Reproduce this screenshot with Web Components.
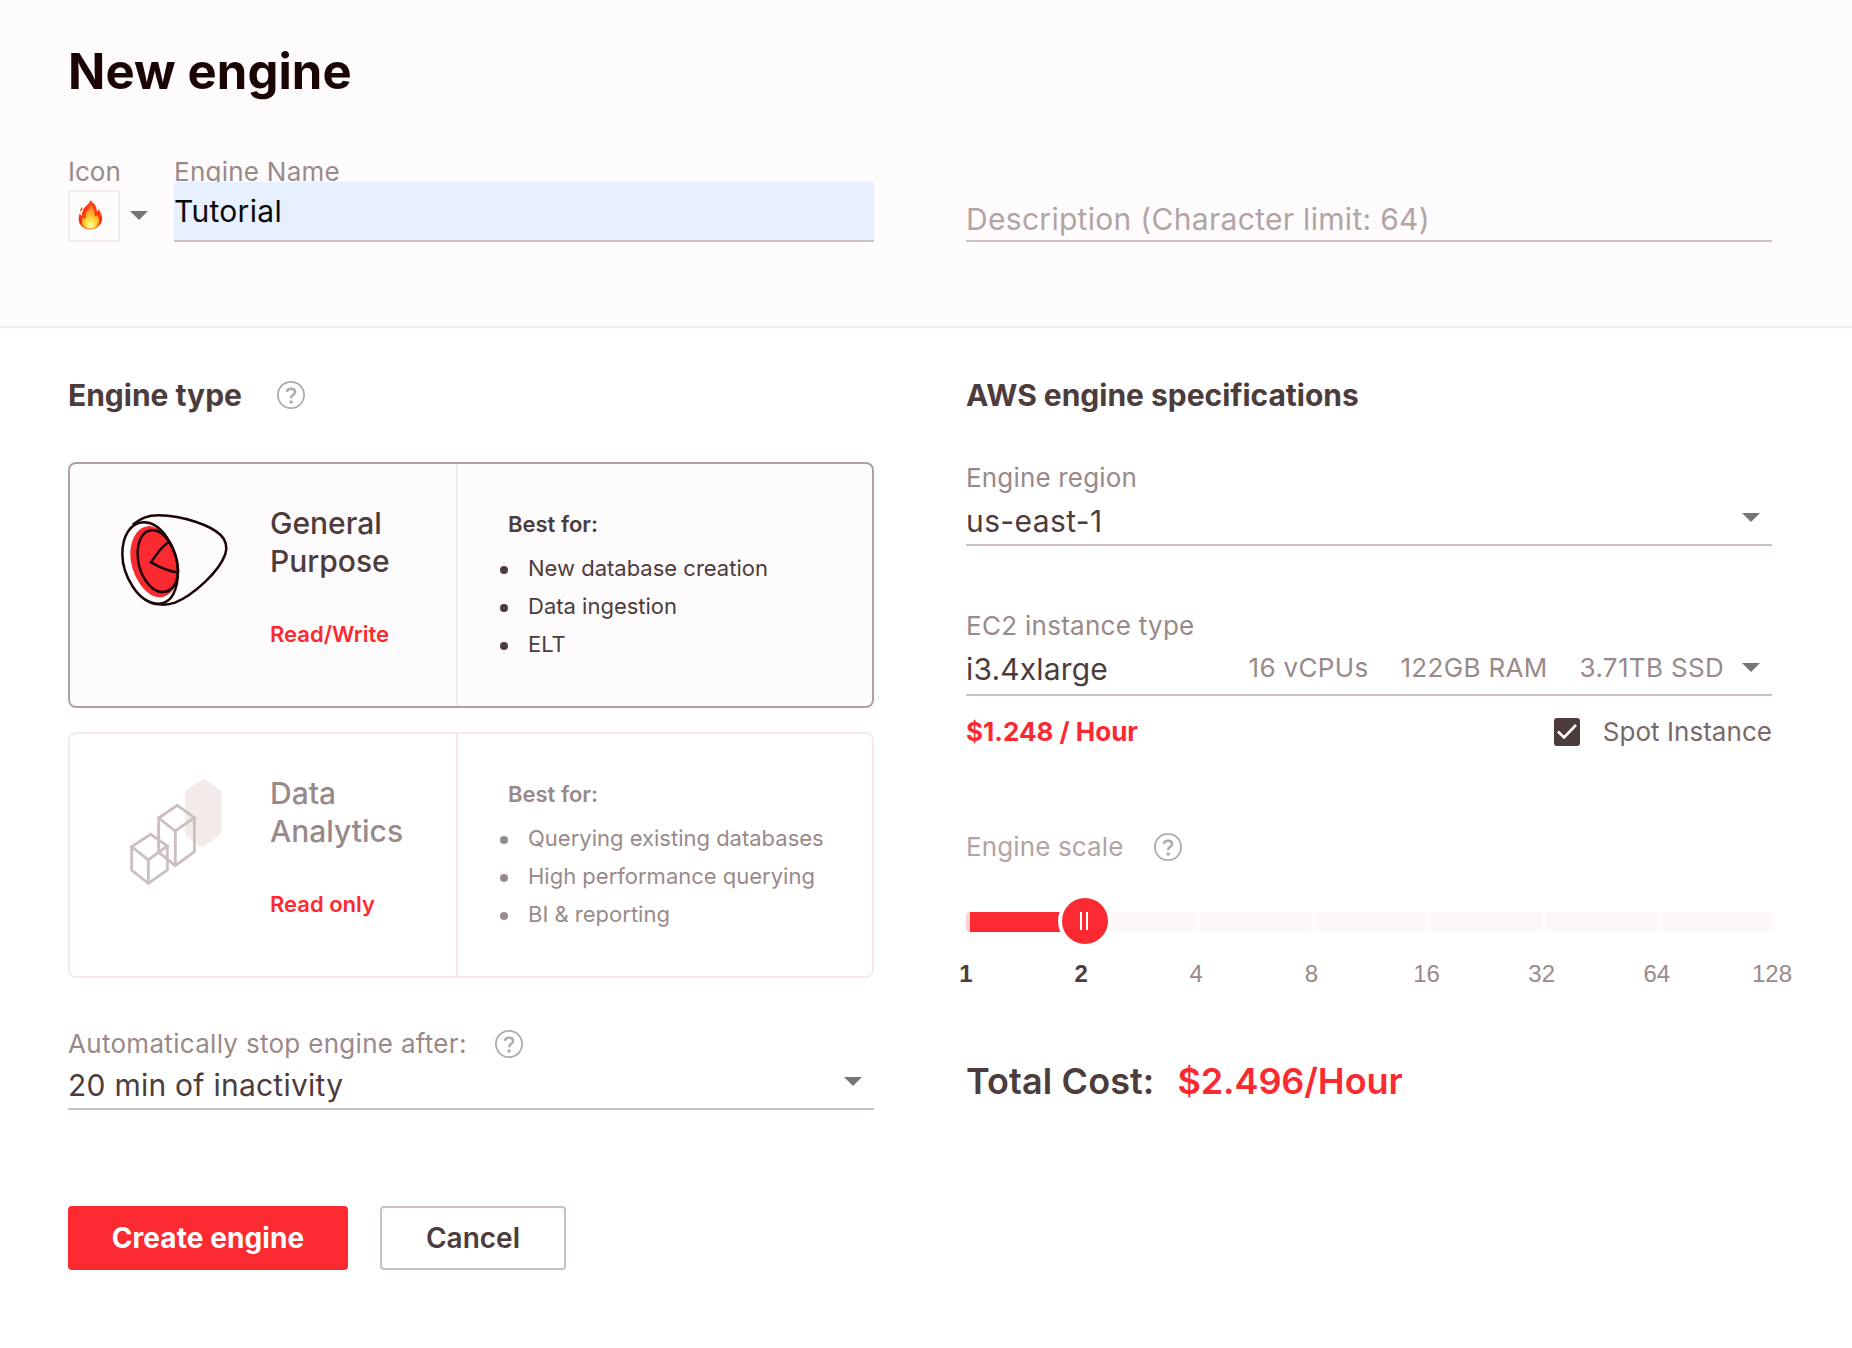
<!DOCTYPE html>
<html lang="en">
<head>
<meta charset="utf-8">
<title>New engine</title>
<style>
  body { margin: 0; background: #fff; font-family: Inter, "Liberation Sans", sans-serif; color: #4d3c3c; }
</style>
</head>
<body>
<new-engine-page></new-engine-page>

<script>
const define = (name, html, setup) => {
  const template = document.createElement('template');
  template.innerHTML = html;
  customElements.define(name, class extends HTMLElement {
    constructor() {
      super();
      this.attachShadow({ mode: 'open' }).append(template.content.cloneNode(true));
    }
    connectedCallback() {
      if (setup && !this.ready) { this.ready = true; setup(this, this.shadowRoot); }
    }
  });
};

define('help-icon', `
<style>
  :host { display: block; width: 28px; height: 28px; }
  svg { display: block; }
</style>
<svg width="28" height="28" viewBox="0 0 28 28" fill="none" stroke="#adadad">
  <circle cx="14" cy="14" r="13.1" stroke-width="1.800"/>
  <path d="M9.900 10.900c.2-2 1.800-3.200 4.100-3.200 2.400 0 4.100 1.300 4.100 3.200 0 1.400-.7 2.200-2 3-1.400.9-1.900 1.500-1.900 2.900v.5" stroke-width="2.500"/>
  <circle cx="14.100" cy="21" r="1.800" fill="#adadad" stroke="none"/>
</svg>`);

define('caret-icon', `
<style>
  :host { display: block; width: 18px; height: 9px; }
  svg { display: block; }
</style>
<svg width="18" height="9" viewBox="0 0 18 9"><path d="M0 0h18L9 9z" fill="#757575"/></svg>`);

define('field-label', `
<style>
  :host { display: flex; align-items: center; box-sizing: border-box; height: 32px; padding-top: 2px; font-size: 26px; line-height: 30px; color: #998a8a; letter-spacing: .25px; white-space: nowrap; }
  ::slotted(help-icon) { margin-left: 28px; }
</style>
<slot></slot>`);

define('section-title', `
<style>
  :host { display: flex; align-items: center; height: 36px; font-size: 30px; line-height: 36px; font-weight: 700; letter-spacing: -.02px; white-space: nowrap; }
  ::slotted(help-icon) { margin-left: 35px; }
</style>
<slot></slot>`);

define('select-line', `
<style>
  :host { display: flex; box-sizing: border-box; border-bottom: 2px solid #cbbfbf; padding-right: 12px; font-size: 30px; letter-spacing: .25px; line-height: 40px; white-space: nowrap; }
  .value { flex: 1; }
  .specs { display: flex; gap: 32px; margin-right: 18px; font-size: 26px; line-height: 38px; color: #998a8a; letter-spacing: .33px; }
  caret-icon { margin-top: var(--caret-top, 12px); }
</style>
<div class="value"><slot></slot></div>
<div class="specs"><slot name="spec"></slot></div>
<caret-icon></caret-icon>`);

define('icon-picker', `
<style>
  :host { display: block; width: 106px; }
  .row { display: flex; align-items: flex-start; gap: 10px; margin-top: 3px; }
  caret-icon { margin-top: 21px; }
  .box { box-sizing: border-box; width: 52px; height: 52px; border: 2px solid #f5eaea; display: flex; padding: 6px 0 0 8px; }
</style>
<field-label style="letter-spacing:0">Icon</field-label>
<div class="row">
  <div class="box">
    <svg width="25" height="32" viewBox="0 0 25 32">
      <defs>
        <linearGradient id="outer" x1="0" y1="0" x2="0" y2="1">
          <stop offset="0" stop-color="#e8481c"/><stop offset=".45" stop-color="#ff3a12"/><stop offset=".75" stop-color="#fa2a0c"/><stop offset="1" stop-color="#ff9d1c"/>
        </linearGradient>
        <radialGradient id="inner" cx=".5" cy=".88" r=".8">
          <stop offset="0" stop-color="#fffcc8"/><stop offset=".28" stop-color="#ffe84a"/><stop offset=".6" stop-color="#ffb42a"/><stop offset="1" stop-color="#f5702a"/>
        </radialGradient>
      </defs>
      <path d="M12.200 2.500c4.200 2.500 6.800 6.500 6.700 11.300.8-.6 1.200-1.500 1.500-2.600 2.400 2.800 3.800 6 3.700 9.400-.2 6.400-5.100 10.900-11.400 10.900C6.300 31.500.9 27.600.7 21.400c-.1-2.200.3-4.300 1.300-6.300.3 1.400.9 2.500 1.900 3.200-.1-4.600 1.400-8 4.300-10.500 1.900-1.600 3.400-3 4-5.300z" fill="url(#outer)"/>
      <path d="M12.600 6.500c2.600 3 4.300 6.300 4 10.300-.1 1.200.4 1.700 1 1.500.7-.2 1.200-.8 1.600-1.400 1.500 2.200 2.200 4.300 1.800 6.600-.6 4-3.700 7-8.100 7-5 0-8.800-2.900-9-7.200-.1-1.500.2-2.900.8-4.100.8 1 1.800 1.400 2.700 1.100.6-.3.5-1.300.4-2.600-.2-4.400 3.800-6 4.800-11.200z" fill="url(#inner)"/>
      <path d="M3.600 9.300l1.200.9-2 3.200-1-.9z" fill="#ff4a18"/>
    </svg>
  </div>
  <caret-icon></caret-icon>
</div>`);

define('name-input', `
<style>
  :host { display: block; width: 700px; }
  .label { height: 27px; }
  .input { position: relative; box-sizing: border-box; height: 60px; background: #e6f0ff; border-bottom: 2px solid #cbbfbf; color: #0d0808; font-size: 30px; line-height: 58px; letter-spacing: .3px; }
</style>
<div class="label"><field-label>Engine Name</field-label></div>
<div class="input">Tutorial</div>`);

define('description-input', `
<style>
  :host { display: block; box-sizing: border-box; width: 806px; height: 42px; border-bottom: 2px solid #cbbfbf; color: #b3a4a4; font-size: 30px; line-height: 38px; letter-spacing: .3px; white-space: nowrap; }
</style>
Description (Character limit: 64)`);

define('page-header', `
<style>
  :host { display: block; box-sizing: border-box; height: 328px; padding: 42px 80px 0 68px; background: #fefbfc; border-bottom: 2px solid #f5ecea; }
  h1 { margin: 0 0 53px; height: 60px; font-size: 49px; line-height: 60px; font-weight: 700; letter-spacing: .1px; color: #1b0405; }
  .fields { display: flex; }
  description-input { margin: 45px 0 0 92px; }
</style>
<h1>New engine</h1>
<div class="fields">
  <icon-picker></icon-picker>
  <name-input></name-input>
  <description-input></description-input>
</div>`);

define('engine-card', `
<style>
  :host { display: flex; box-sizing: border-box; width: 806px; height: 246px; border: 2px solid #f5eaea; border-radius: 8px; color: #998a8a; }
  :host([selected]) { border-color: #b0a2a2; background: #fefbfc; color: #4d3c3c; }
  .left { display: flex; box-sizing: border-box; width: 388px; border-right: 2px solid #f5eaea; }
  .icon { width: 200px; }
  h3 { margin: 40px 0 0; font-size: 30px; line-height: 38px; font-weight: 500; letter-spacing: 0; }
  .mode { margin-top: 39px; color: #fb2a31; font-size: 22px; line-height: 30px; font-weight: 600; }
  .right { flex: 1; padding: 45px 0 0 50px; font-size: 22px; line-height: 30px; }
  .best { font-weight: 600; }
  ul { margin: 10px 0 0; padding: 0; list-style: none; line-height: 38px; white-space: nowrap; }
  li { display: flex; align-items: center; margin-left: -8px; }
  li::before { content: ""; width: 8px; height: 8px; border-radius: 50%; margin: 3px 20px 0 0; background: currentColor; }
</style>
<div class="left">
  <div class="icon"><slot name="icon"></slot></div>
  <div><h3></h3><div class="mode"></div></div>
</div>
<div class="right"><div class="best">Best for:</div><ul></ul></div>`,
(host, root) => {
  const [first, second] = host.getAttribute('name').split(' ');
  root.querySelector('h3').append(first, document.createElement('br'), second);
  root.querySelector('.mode').textContent = host.getAttribute('mode');
  for (const text of host.getAttribute('uses').split('|')) {
    const li = document.createElement('li');
    li.textContent = text;
    root.querySelector('ul').append(li);
  }
});

define('scope-icon', `
<style>
  :host { display: block; padding: 46px 0 0 48px; }
  svg { display: block; }
</style>
<svg width="114" height="99" viewBox="204 450 342 297" fill="none" stroke="#1b0405" stroke-width="7.500" stroke-linejoin="round">
  <path d="M285 487C240 487 217 530 217 582 217 645 265 731 325 731 365 731 384 690 384 630 382 565 335 487 285 487Z" fill="#fff" stroke="none"/>
  <path d="M298 498C262 498 241 540 241 582 241 645 287 712 328 712 348 712 366 698 374 680L384 630C378 570 340 500 298 498Z" fill="#fb2a31" stroke="none"/>
  <path d="M248 494C272 475 292 466 326 466 402 467 482 497 512 525 530 543 532 562 526 582 508 635 430 705 375 728 352 736 320 736 300 727"/>
  <path d="M283 487C240 487 217 530 217 582 217 645 265 731 325 731 365 731 384 690 384 630 381 560 332 487 283 487Z"/>
  <path d="M308 511C278 511 263 542 263 582 263 640 300 696 337 696 368 696 384 668 384 630 380 570 345 511 308 511Z"/>
  <path d="M360 545C343 552 330 568 303 607 330 622 358 636 384 637" stroke-linejoin="miter"/>
</svg>`);

define('cubes-icon', `
<style>
  :host { display: block; padding: 43px 0 0 52px; }
  svg { display: block; }
</style>
<svg width="102" height="110" viewBox="216 171 306 330" fill="none" stroke="#cbbfbf" stroke-width="8.500">
  <path d="M462 176L514 212V341L457 383 405 345V212Z" fill="#f5eaea" stroke="none"/>
  <path d="M245 380L302 343 352 378 295 420ZM245 378V450L295 490 352 450V378M295 420V494"/>
  <path d="M326 294L382 256 433 293 376 333ZM326 292V397L376 437 433 395V292M376 333V440"/>
</svg>`);

define('action-button', `
<style>
  :host { display: flex; align-items: center; justify-content: center; box-sizing: border-box; width: 186px; height: 64px; border: 2px solid #cbbfbf; border-radius: 4px; font-size: 28px; font-weight: 600; letter-spacing: 0; }
  :host([primary]) { width: 280px; border-color: #fb2a31; background: #fb2a31; color: #fff; font-weight: 700; letter-spacing: .1px; }
</style>
<slot></slot>`);

define('check-box', `
<style>
  :host { display: flex; align-items: center; gap: 23px; font-size: 26px; line-height: 32px; color: #7a6868; letter-spacing: .04px; white-space: nowrap; }
  svg { display: block; }
</style>
<svg width="26" height="28" viewBox="0 0 26 28"><rect width="26" height="28" rx="3" fill="#4d3c3c"/><path d="M4 13.500l6 6L22 7" fill="none" stroke="#fff" stroke-width="2.600"/></svg>
<slot></slot>`);

define('scale-slider', `
<style>
  :host { display: block; }
  .track { display: flex; width: 810px; height: 20px; }
  .edge { width: 4px; background: #fdd0d2; border-radius: 4px 0 0 4px; }
  .cell { flex: none; width: calc(806px / 7); box-sizing: border-box; border-right: 4px solid #fefcfc; background: #fcf8f8; }
  .cell.on { position: relative; border-right: 0; background: #fb2a31; }
  .thumb { position: absolute; right: -27px; top: -18px; display: flex; justify-content: center; gap: 4px; align-items: center; box-sizing: border-box; width: 54px; height: 54px; border: 4px solid #fff; border-radius: 50%; background: #fb2a31; z-index: 1; padding-right: 2px; }
  .thumb i { width: 2px; height: 18px; background: #fff; }
  .marks { display: flex; justify-content: space-between; margin: 28px 0 0; font: 24px/28px "Liberation Sans", sans-serif; color: #998a8a; }
  .marks span { display: flex; justify-content: center; width: 0; }
  .marks .on { color: #4d3c3c; font-weight: 700; }
</style>
<div class="track">
  <div class="edge"></div>
  <div class="cell on"><div class="thumb"><i></i><i></i></div></div>
  <div class="cell"></div><div class="cell"></div><div class="cell"></div><div class="cell"></div><div class="cell"></div><div class="cell"></div>
</div>
<div class="marks"><span class="on">1</span><span class="on">2</span><span>4</span><span>8</span><span>16</span><span>32</span><span>64</span><span>128</span></div>`);

define('engine-type-panel', `
<style>
  :host { display: flex; flex-direction: column; width: 806px; }
  .cards { display: flex; flex-direction: column; gap: 24px; margin-top: 49px; }
  field-label { margin-top: 49px; letter-spacing: .3px; }
  select-line { margin-top: 6px; height: 45px; --caret-top: 12px; }
  .actions { display: flex; gap: 32px; margin-top: 96px; }
</style>
<section-title>Engine type<help-icon></help-icon></section-title>
<div class="cards">
  <engine-card selected name="General Purpose" mode="Read/Write" uses="New database creation|Data ingestion|ELT"><scope-icon slot="icon"></scope-icon></engine-card>
  <engine-card name="Data Analytics" mode="Read only" uses="Querying existing databases|High performance querying|BI &amp; reporting"><cubes-icon slot="icon"></cubes-icon></engine-card>
</div>
<field-label>Automatically stop engine after:<help-icon></help-icon></field-label>
<select-line>20 min of inactivity</select-line>
<div class="actions"><action-button primary>Create engine</action-button><action-button>Cancel</action-button></div>`);

define('specifications-panel', `
<style>
  :host { display: flex; flex-direction: column; width: 806px; }
  .region-label { margin-top: 48px; letter-spacing: .18px; }
  .region { margin-top: 8px; height: 45px; letter-spacing: .4px; }
  .type-label { margin-top: 63px; letter-spacing: .28px; }
  .type { margin-top: 8px; height: 47px; --caret-top: 14px; letter-spacing: .15px; }
  .price { display: flex; justify-content: space-between; align-items: center; margin-top: 20px; height: 32px; color: #fb2a31; font-size: 26px; line-height: 32px; font-weight: 700; }
  check-box { font-weight: 400; }
  .scale-label { margin-top: 82px; color: #b3a4a4; letter-spacing: .13px; }
  .scale-label help-icon { margin-left: 30px; }
  scale-slider { margin-top: 50px; }
  .total { display: flex; gap: 23px; margin-top: 71px; font-size: 36px; line-height: 44px; font-weight: 600; letter-spacing: .1px; }
  .total b { font-weight: 600; color: #fb2a31; letter-spacing: -.08px; }
</style>
<section-title>AWS engine specifications</section-title>
<field-label class="region-label">Engine region</field-label>
<select-line class="region">us-east-1</select-line>
<field-label class="type-label">EC2 instance type</field-label>
<select-line class="type">i3.4xlarge<span slot="spec">16 vCPUs</span><span slot="spec">122GB RAM</span><span slot="spec">3.71TB SSD</span></select-line>
<div class="price"><span>$1.248 / Hour</span><check-box>Spot Instance</check-box></div>
<field-label class="scale-label">Engine scale<help-icon></help-icon></field-label>
<scale-slider></scale-slider>
<div class="total"><span>Total Cost:</span><b>$2.496/Hour</b></div>`);

define('new-engine-page', `
<style>
  :host { display: block; height: 1348px; overflow: hidden; }
  main { display: flex; gap: 92px; padding: 49px 80px 0 68px; }
</style>
<page-header></page-header>
<main>
  <engine-type-panel></engine-type-panel>
  <specifications-panel></specifications-panel>
</main>`);
</script>
</body>
</html>
